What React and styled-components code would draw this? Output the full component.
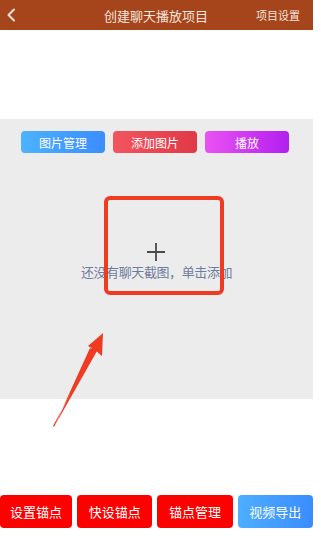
import React from "react";
import styled, { createGlobalStyle } from "styled-components";

const GlobalStyle = createGlobalStyle`
  html, body {
    margin: 0;
    padding: 0;
    background: #ffffff;
  }
  body {
    font-family: "Noto Sans CJK SC", "Noto Sans", sans-serif;
  }
`;

const Page = styled.main`
  position: relative;
  width: 313px;
  height: 537px;
  display: flex;
  flex-direction: column;
`;

const Header = styled.header`
  height: 30px;
  background: #a6441c;
  display: flex;
  align-items: center;
  padding: 0 13px 0 6px;
  color: #f3e4dc;
`;

const Back = styled.button`
  width: 20px;
  height: 30px;
  border: 0;
  padding: 0;
  background: none;
  display: flex;
  align-items: center;
`;

const Title = styled.h1`
  flex: 1;
  margin: 0;
  text-align: center;
  font-size: 13px;
  font-weight: 400;
  padding-left: 30px;
`;

const HeaderAction = styled.span`
  font-size: 11px;
`;

const Stage = styled.section`
  margin-top: 89px;
  height: 280px;
  background: #ececec;
  display: flex;
  flex-direction: column;
  align-items: center;
`;

const Toolbar = styled.div`
  display: flex;
  gap: 8px;
  margin-top: 12px;
  margin-right: 3px;
`;

const ToolButton = styled.button`
  width: 84px;
  height: 22px;
  border: 0;
  border-radius: 4px;
  color: #fff;
  font-family: inherit;
  font-size: 12px;
  padding: 0;
  background: ${(p) => p.$bg};
`;

const Empty = styled.div`
  margin-top: 90px;
  display: flex;
  flex-direction: column;
  align-items: center;
  gap: 1px;
`;

const EmptyText = styled.span`
  font-size: 13px;
  color: #6f7c9c;
  letter-spacing: -0.4px;
`;

const Footer = styled.nav`
  margin-top: 96px;
  display: flex;
  gap: 5px;
`;

const FooterButton = styled.button`
  flex: ${(p) => (p.$narrow ? "0 0 72px" : "1")};
  height: 33px;
  border: 0;
  border-radius: 4px;
  color: #fff;
  font-family: inherit;
  font-size: 13px;
  padding: 0;
  background: ${(p) => (p.$blue ? "linear-gradient(90deg, #4eaeff, #3a8cff)" : "#ff0000")};
`;

const Highlight = styled.div`
  position: absolute;
  left: 104px;
  top: 196px;
  width: 112px;
  height: 91px;
  border: 4px solid #ee3b22;
  border-radius: 6px;
  pointer-events: none;
`;

const Arrow = styled.svg`
  position: absolute;
  left: 50px;
  top: 330px;
  pointer-events: none;
`;

const tools = [
  { label: "图片管理", bg: "linear-gradient(90deg, #4db2ff, #3a8dff)" },
  { label: "添加图片", bg: "linear-gradient(90deg, #f2555d, #e03947)" },
  { label: "播放", bg: "linear-gradient(90deg, #ea52f2, #b21ff0)" },
];

const actions = ["设置锚点", "快设锚点", "锚点管理", "视频导出"];

export default function App() {
  return (
    <Page>
      <GlobalStyle />
      <Header>
        <Back aria-label="返回">
          <svg width="10" height="14" viewBox="0 0 10 14">
            <path d="M8 1.5 L2.5 7 L8 12.5" fill="none" stroke="#f3e4dc" strokeWidth="2" strokeLinecap="round" strokeLinejoin="round" />
          </svg>
        </Back>
        <Title>创建聊天播放项目</Title>
        <HeaderAction>项目设置</HeaderAction>
      </Header>
      <Stage>
        <Toolbar>
          {tools.map((t) => (
            <ToolButton key={t.label} $bg={t.bg}>
              {t.label}
            </ToolButton>
          ))}
        </Toolbar>
        <Empty>
          <svg width="18" height="18" viewBox="0 0 18 18">
            <path d="M9 0 V18 M0 9 H18" stroke="#4a4a4a" strokeWidth="1.8" />
          </svg>
          <EmptyText>还没有聊天截图，单击添加</EmptyText>
        </Empty>
      </Stage>
      <Footer>
        {actions.map((a, i) => (
          <FooterButton key={a} $blue={i === 3} $narrow={i === 0}>
            {a}
          </FooterButton>
        ))}
      </Footer>
      <Highlight />
      <Arrow width="60" height="100" viewBox="0 0 60 100">
        <path d="M3 96 L44 20 L40 18 L4 97 Z" fill="#ee3b22" />
        <path d="M53 3 L52 26 L45 20 L38 16 Z" fill="#ee3b22" />
        <path d="M44 14 L47 21 L4 97 Z" fill="#ee3b22" />
      </Arrow>
    </Page>
  );
}
